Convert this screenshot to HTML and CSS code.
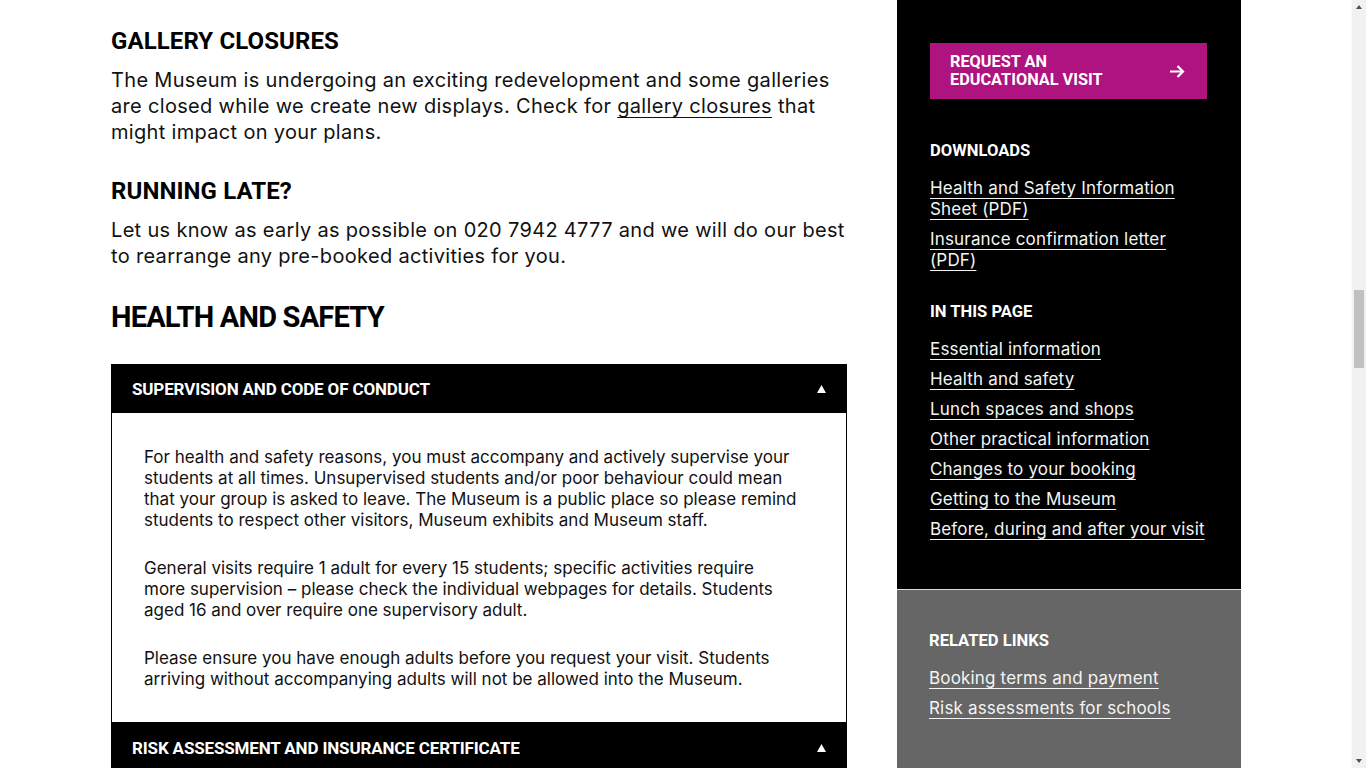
FILE: index.html
```html
<!DOCTYPE html>
<html lang="en">
<head>
<meta charset="utf-8">
<title>Essential information for schools</title>
<link rel="stylesheet" href="styles.css">
</head>
<body>
<div class="page">
  <main class="content">
    <h2 class="h-sub">Gallery closures</h2>
    <p class="lead">The Museum is undergoing an exciting redevelopment and some galleries are closed while we create new displays. Check for <a href="#">gallery closures</a> that might impact on your plans.</p>

    <h2 class="h-sub h-gap">Running late?</h2>
    <p class="lead">Let us know as early as possible on 020 7942 4777 and we will do our best to rearrange any pre-booked activities for you.</p>

    <h2 class="h-main">Health and safety</h2>

    <section class="accordion">
      <div class="acc-item">
        <div class="acc-head">
          <span>Supervision and code of conduct</span>
          <svg class="tri" width="9" height="8" viewBox="0 0 9 8"><polygon points="4.5,0 9,8 0,8" fill="#fff"/></svg>
        </div>
        <div class="acc-body">
          <p>For health and safety reasons, you must accompany and actively supervise your students at all times. Unsupervised students and/or poor behaviour could mean that your group is asked to leave. The Museum is a public place so please remind students to respect other visitors, Museum exhibits and Museum staff.</p>
          <p>General visits require 1 adult for every 15 students; specific activities require more supervision – please check the individual webpages for details. Students aged 16 and over require one supervisory adult.</p>
          <p>Please ensure you have enough adults before you request your visit. Students arriving without accompanying adults will not be allowed into the Museum.</p>
        </div>
      </div>
      <div class="acc-item">
        <div class="acc-head">
          <span>Risk assessment and insurance certificate</span>
          <svg class="tri" width="9" height="8" viewBox="0 0 9 8"><polygon points="4.5,0 9,8 0,8" fill="#fff"/></svg>
        </div>
      </div>
      <div class="acc-item">
        <div class="acc-head">
          <span>First aid and emergencies</span>
          <svg class="tri" width="9" height="8" viewBox="0 0 9 8"><polygon points="4.5,0 9,8 0,8" fill="#fff"/></svg>
        </div>
      </div>
    </section>
  </main>

  <aside class="sidebar">
    <div class="side-dark">
      <a class="cta" href="#">
        <span>Request an<br>educational visit</span>
        <svg class="arrow" width="15" height="13" viewBox="0 0 15 13"><path d="M0 6.5H13M7.5 1L13 6.5L7.5 12" fill="none" stroke="#fff" stroke-width="2.2"/></svg>
      </a>

      <h3 class="side-h side-first">Downloads</h3>
      <ul class="links">
        <li><a href="#">Health and Safety Information Sheet (PDF)</a></li>
        <li><a href="#">Insurance confirmation letter (PDF)</a></li>
      </ul>

      <h3 class="side-h side-next">In this page</h3>
      <ul class="links">
        <li><a href="#">Essential information</a></li>
        <li><a href="#">Health and safety</a></li>
        <li><a href="#">Lunch spaces and shops</a></li>
        <li><a href="#">Other practical information</a></li>
        <li><a href="#">Changes to your booking</a></li>
        <li><a href="#">Getting to the Museum</a></li>
        <li><a href="#">Before, during and after your visit</a></li>
      </ul>
    </div>
    <div class="side-gray">
      <h3 class="side-h">Related links</h3>
      <ul class="links">
        <li><a href="#">Booking terms and payment</a></li>
        <li><a href="#">Risk assessments for schools</a></li>
      </ul>
    </div>
  </aside>
</div>

<div class="scrollbar" aria-hidden="true">
  <span class="sb-up"></span>
  <span class="sb-thumb"></span>
  <span class="sb-down"></span>
</div>
</body>
</html>
```

FILE: styles.css
```css
body {
  margin: 0;
  background: #fff;
  color: #111;
  font-family: Inter, "Noto Sans", sans-serif;
}

.page {
  display: grid;
  grid-template-columns: 736px 344px;
  column-gap: 50px;
  margin-left: 111px;
  width: 1130px;
}

.content {
  padding-top: 27px;
  padding-bottom: 200px;
}

.h-sub {
  margin: 0;
  font-family: Roboto, "Liberation Sans", sans-serif;
  font-weight: 700;
  font-size: 24px;
  line-height: 28px;
  letter-spacing: 0.1px;
  text-transform: uppercase;
  color: #000;
}

.h-gap {
  margin-top: 32px;
}

.lead {
  margin: 12px 0 0;
  font-size: 20px;
  line-height: 26px;
  letter-spacing: 0.32px;
  color: #111;
}

.lead a {
  color: inherit;
  text-decoration: underline;
  text-underline-offset: 4px;
  text-decoration-thickness: 1px;
}

.h-main {
  margin: 31px 0 0;
  font-family: Roboto, "Liberation Sans", sans-serif;
  font-weight: 700;
  font-size: 29px;
  line-height: 34px;
  letter-spacing: -0.8px;
  text-transform: uppercase;
  color: #000;
}

.accordion {
  margin-top: 30px;
}

.acc-head {
  display: flex;
  align-items: center;
  justify-content: space-between;
  height: 49px;
  padding: 0 21px;
  background: #000;
  color: #fff;
  font-family: Roboto, "Liberation Sans", sans-serif;
  font-weight: 700;
  font-size: 17px;
  letter-spacing: -0.15px;
  text-transform: uppercase;
}

.acc-head span {
  margin-top: 1px;
}

.tri {
  display: block;
}

.acc-body {
  border: 1px solid #000;
  border-top: 0;
  padding: 34px 48px 32px 32px;
}

.acc-body p {
  margin: 0 0 27px;
  font-size: 17px;
  line-height: 21px;
  color: #111;
}

.acc-body p:last-child {
  margin-bottom: 0;
}

.sidebar {
  display: flex;
  flex-direction: column;
}

.side-dark {
  background: #000;
  padding: 43px 34px 49px 33px;
  border-bottom: 1px solid #ddd;
}

.side-gray {
  flex: 1;
  background: #666;
  padding: 41px 33px 60px 32px;
}

.cta {
  display: flex;
  align-items: center;
  justify-content: space-between;
  height: 56px;
  box-sizing: border-box;
  padding: 0 22px 0 20px;
  background: #af1380;
  color: #fff;
  text-decoration: none;
  font-family: Roboto, "Liberation Sans", sans-serif;
  font-weight: 700;
  font-size: 16.3px;
  line-height: 18px;
  text-transform: uppercase;
}

.arrow {
  display: block;
}

.side-h {
  margin: 0;
  font-family: Roboto, "Liberation Sans", sans-serif;
  font-weight: 700;
  font-size: 16.6px;
  line-height: 19px;
  text-transform: uppercase;
  color: #fff;
}

.side-first {
  margin-top: 42px;
}

.side-next {
  margin-top: 31px;
}

.links {
  list-style: none;
  margin: 18px 0 0;
  padding: 0;
  display: flex;
  flex-direction: column;
  gap: 9px;
}

.links li {
  line-height: 21px;
}

.links a {
  color: #f4f4f4;
  font-size: 17px;
  line-height: 21px;
  letter-spacing: 0.17px;
  text-decoration: underline;
  text-underline-offset: 4px;
  text-decoration-thickness: 1px;
}

/* imitation of the browser scrollbar seen in the reference */
.scrollbar {
  position: fixed;
  top: 0;
  right: 0;
  bottom: 0;
  width: 15px;
  background: #f1f1f1;
  border-left: 1px solid #fafafa;
  box-sizing: border-box;
}

.sb-thumb {
  position: absolute;
  left: 2px;
  right: 2px;
  top: 290px;
  height: 78px;
  background: #c1c1c1;
}

.sb-up,
.sb-down {
  position: absolute;
  left: 4px;
  width: 0;
  height: 0;
  border-left: 3.5px solid transparent;
  border-right: 3.5px solid transparent;
}

.sb-up {
  top: 5px;
  border-bottom: 4px solid #505050;
}

.sb-down {
  bottom: 5px;
  border-top: 4px solid #505050;
}
```
